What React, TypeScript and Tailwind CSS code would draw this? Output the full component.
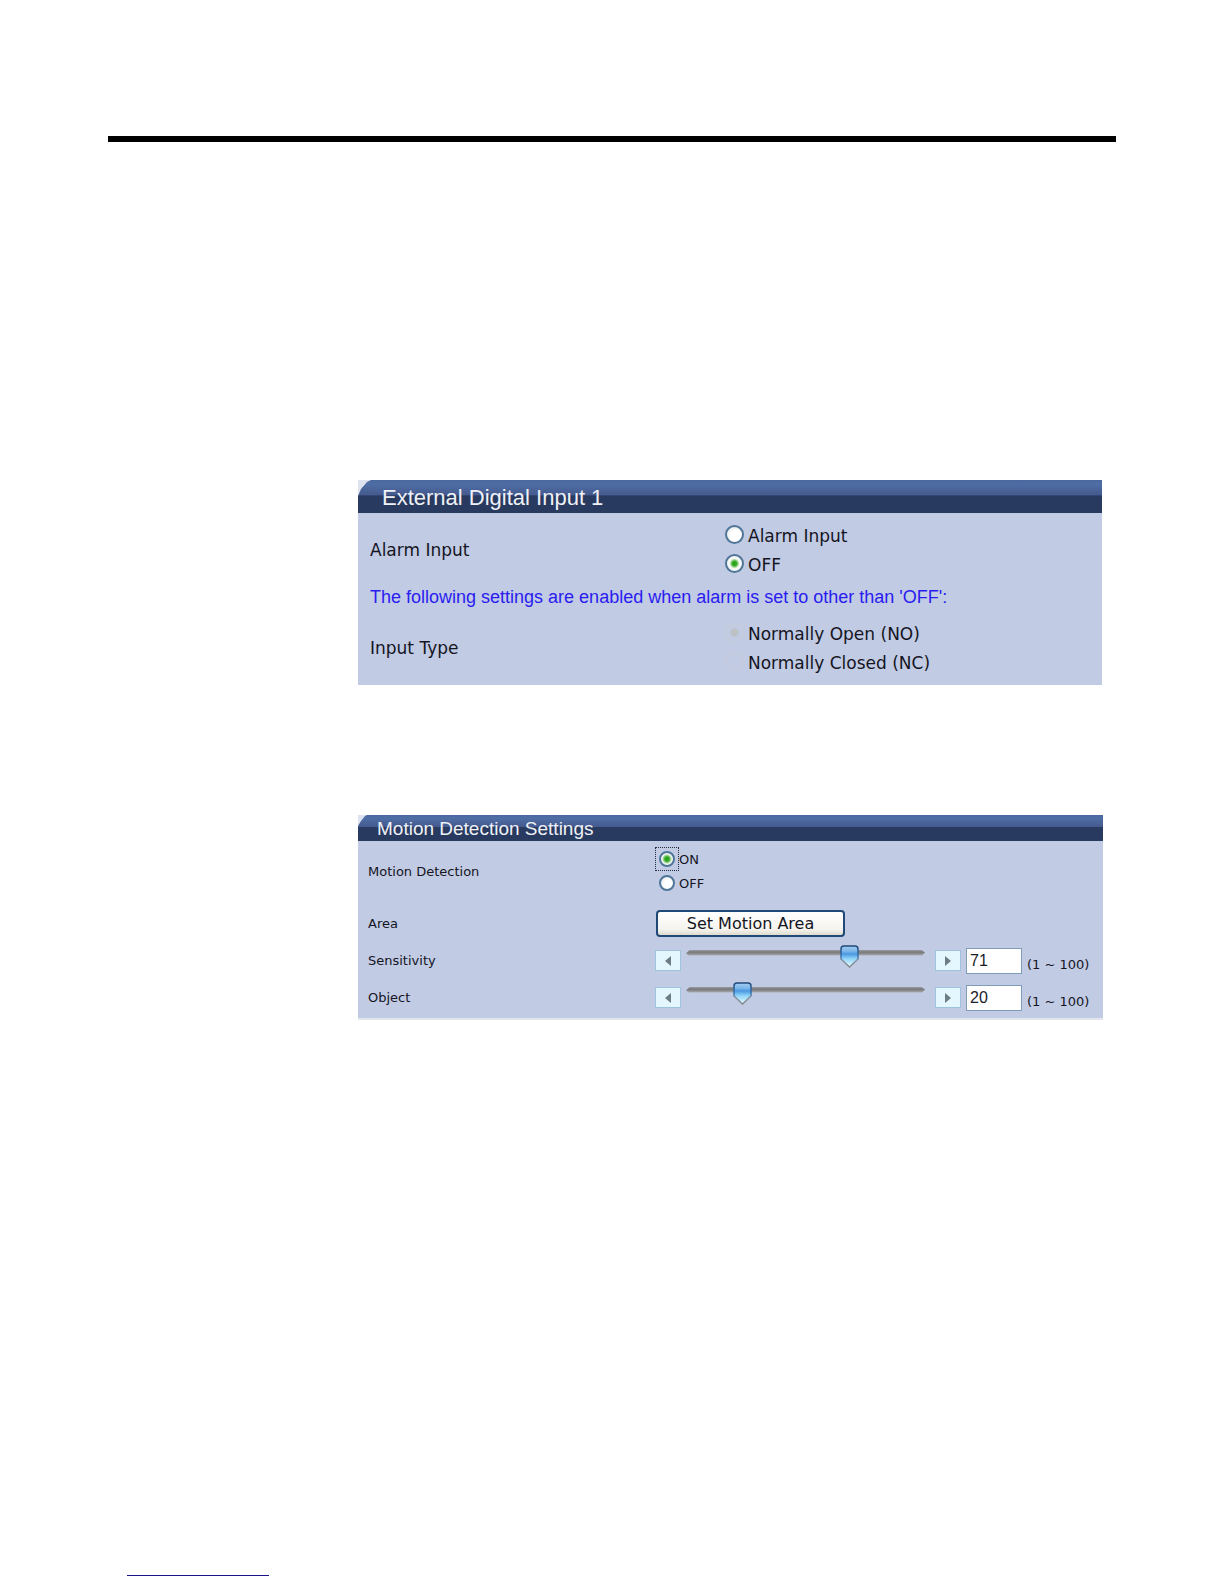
import { useId, useState } from "react";

type Size = "lg" | "sm";

function Radio({
  name,
  label,
  size,
  defaultChecked,
  disabled,
  outlined,
}: {
  name: string;
  label: string;
  size: Size;
  defaultChecked?: boolean;
  disabled?: boolean;
  outlined?: boolean;
}) {
  const shape = size === "lg" ? "size-[19px]" : "size-4";
  const tone = disabled
    ? "border-[#c4cbdd] bg-transparent checked:bg-[radial-gradient(circle,#bcc1c2_3px,transparent_5px)]"
    : "border-[#4f7698] bg-[radial-gradient(circle_at_60%_60%,#ffffff_40%,#dcdfe0)] checked:bg-[radial-gradient(circle,#2fa51f_2px,#6cc45f_3px,#f6f8f6_5px)]";
  const frame = size === "lg" ? "w-[19px] -mt-1" : "w-6 h-6 -mt-[2px]";
  return (
    <label
      className={
        size === "lg"
          ? "flex h-[29px] items-center gap-[4px] text-[17px]"
          : "flex h-6 items-center text-[13px]"
      }
    >
      <span
        className={`flex items-center justify-center border ${frame} ${
          outlined ? "border-dotted border-[#222a3c]" : "border-transparent"
        }`}
      >
        <input
          type="radio"
          name={name}
          defaultChecked={defaultChecked}
          disabled={disabled}
          className={`shrink-0 appearance-none rounded-full border-2 ${shape} ${tone}`}
        />
      </span>
      {label}
    </label>
  );
}

function PanelHeader({ title, size }: { title: string; size: Size }) {
  return (
    <div className="bg-[#dde4f0]">
      <h2
        className={`bg-[linear-gradient(#4a67a0,#4f6ea6_12%,#455a8e_45%,#293a61_48%,#293a5f)] font-['Liberation_Sans',sans-serif] text-[#eef1f6] ${
          size === "lg"
            ? "h-[33px] pl-6 text-[22px] leading-[36px] [clip-path:polygon(0_100%,0_16px,3px_9px,9px_2px,13px_0,100%_0,100%_100%)]"
            : "h-[26px] pl-[19px] text-[19px] leading-[27px] [clip-path:polygon(0_100%,0_11px,3px_6px,7px_1px,9px_0,100%_0,100%_100%)]"
        }`}
      >
        {title}
      </h2>
    </div>
  );
}

function StepButton({
  direction,
  label,
  onClick,
}: {
  direction: "left" | "right";
  label: string;
  onClick: () => void;
}) {
  return (
    <button
      type="button"
      aria-label={label}
      onClick={onClick}
      className="flex h-[21px] w-[26px] shrink-0 items-center justify-center border border-[#9fc3dc] bg-[#e4f7fe]"
    >
      <svg width="6" height="10" viewBox="0 0 6 10" fill="#6d7c86">
        <path d={direction === "left" ? "M6 0v10L0 5z" : "M0 0v10l6-5z"} />
      </svg>
    </button>
  );
}

function SliderRow({ label, initial }: { label: string; initial: number }) {
  const id = useId();
  const [value, setValue] = useState(initial);
  const update = (next: number) => setValue(Math.min(100, Math.max(1, next || 1)));
  return (
    <div className="grid h-[37px] grid-cols-[287px_1fr] items-center">
      <label htmlFor={id}>{label}</label>
      <div className="flex items-center">
        <StepButton direction="left" label={`Decrease ${label}`} onClick={() => update(value - 1)} />
        <div className="relative mr-[10px] ml-[5px] h-[26px] flex-1">
          <div className="mt-[2px] h-[6px] bg-[linear-gradient(#9a9da6,#77787a_35%,#8a8b8d_60%,#b4b5bb)] [clip-path:polygon(0_4px,4px_0,calc(100%-4px)_0,100%_3px,calc(100%-3px)_100%,3px_100%)]" />
          <svg
            className="absolute -top-[3px] -ml-[9px]"
            style={{ left: `calc(16px + (100% - 31px) * ${(value - 1) / 99})` }}
            width="19"
            height="23"
            viewBox="0 0 19 23"
          >
            <defs>
              <linearGradient id={`${id}-fill`} x1="0" y1="0" x2="0" y2="1">
                <stop offset="0" stopColor="#a5cdf0" />
                <stop offset=".25" stopColor="#7ab6ea" />
                <stop offset=".38" stopColor="#4a98e0" />
                <stop offset=".6" stopColor="#8fd3f8" />
                <stop offset="1" stopColor="#e8ffff" />
              </linearGradient>
              <linearGradient id={`${id}-edge`} x1="0" y1="0" x2="0" y2="1">
                <stop offset="0" stopColor="#1d4778" />
                <stop offset=".5" stopColor="#3c76b0" />
                <stop offset=".7" stopColor="#86939c" />
                <stop offset="1" stopColor="#85898c" />
              </linearGradient>
            </defs>
            <path
              d="M4 1h11q3 0 3 3v10l-8.500 8L1 14V4q0-3 3-3z"
              fill={`url(#${id}-fill)`}
              stroke={`url(#${id}-edge)`}
              strokeWidth="1.500"
            />
          </svg>
          <input
            type="range"
            min={1}
            max={100}
            value={value}
            aria-label={`${label} slider`}
            onChange={(e) => update(Number(e.target.value))}
            className="absolute inset-0 w-full opacity-0"
          />
        </div>
        <StepButton direction="right" label={`Increase ${label}`} onClick={() => update(value + 1)} />
        <input
          id={id}
          type="text"
          value={value}
          onChange={(e) => update(Number(e.target.value))}
          className="ml-[5px] h-[26px] w-14 border border-[#7f9db9] bg-white px-[3px] font-['Liberation_Sans',sans-serif] text-[16px] text-[#1c1c28]"
        />
        <span className="mt-2 ml-[5px] w-[66px]">(1 ~ 100)</span>
      </div>
    </div>
  );
}

export default function App() {
  return (
    <main className="flex min-h-screen flex-col bg-white px-[108px] pt-[136px] font-['DejaVu_Sans',sans-serif] text-[#15151f]">
      <hr className="h-[6px] border-0 bg-black" />

      <div className="mt-[338px] mr-[13px] ml-[250px] flex flex-col gap-[130px]">
        <section className="mr-px bg-[#c1cbe4]">
          <PanelHeader title="External Digital Input 1" size="lg" />
          <div className="pt-[9px] pb-2 pl-3 text-[17px]">
            <fieldset className="grid grid-cols-[355px_1fr] items-center">
              <span>Alarm Input</span>
              <div>
                <Radio name="alarm" label="Alarm Input" size="lg" />
                <Radio name="alarm" label="OFF" size="lg" defaultChecked />
              </div>
            </fieldset>
            <p className="mb-[6px] font-['Liberation_Sans',sans-serif] text-[18px] leading-[34px] text-[#2a1cf0]">
              The following settings are enabled when alarm is set to other than 'OFF':
            </p>
            <fieldset className="-mb-px grid grid-cols-[355px_1fr] items-center">
              <span>Input Type</span>
              <div>
                <Radio name="type" label="Normally Open (NO)" size="lg" disabled defaultChecked />
                <Radio name="type" label="Normally Closed (NC)" size="lg" disabled />
              </div>
            </fieldset>
          </div>
        </section>

        <section className="border-b-2 border-[#e3e5ec] bg-[#c1cbe4]">
          <PanelHeader title="Motion Detection Settings" size="sm" />
          <div className="pt-[7px] pr-[10px] pb-[2px] pl-[10px] text-[13px]">
            <fieldset className="grid grid-cols-[287px_1fr] items-center">
              <span>Motion Detection</span>
              <div>
                <Radio name="motion" label="ON" size="sm" defaultChecked outlined />
                <Radio name="motion" label="OFF" size="sm" />
              </div>
            </fieldset>
            <div className="mt-[9px] grid h-[37px] grid-cols-[288px_1fr] items-center">
              <span>Area</span>
              <button
                type="button"
                className="h-[27px] w-[189px] rounded-[4px] border-2 border-[#1f4a78] bg-[linear-gradient(#ffffff,#f5f4ee_75%,#dedace)] text-[16px] leading-none"
              >
                Set Motion Area
              </button>
            </div>
            <SliderRow label="Sensitivity" initial={71} />
            <SliderRow label="Object" initial={20} />
          </div>
        </section>
      </div>

      <div className="mt-auto mb-2 ml-[19px] w-[142px] border-b border-[#1a1487]" />
    </main>
  );
}
